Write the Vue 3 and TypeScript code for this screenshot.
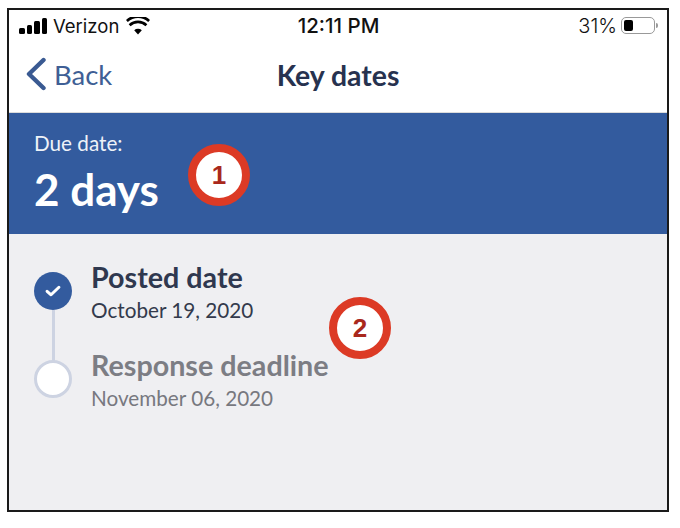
<script setup lang="ts">
const dates = [
  { title: 'Posted date', date: 'October 19, 2020', done: true },
  { title: 'Response deadline', date: 'November 06, 2020', done: false }
]
</script>

<template>
  <main class="frame">
    <div class="status">
      <div class="status-left">
        <span class="signal"><i></i><i></i><i></i><i></i></span>
        <span>Verizon</span>
        <svg class="wifi" width="24" height="18" viewBox="0 0 24 18">
          <path d="M12 17.5 8.2 13.2a5.6 5.6 0 0 1 7.6 0Z" fill="#000" />
          <path d="M3.6 8.2a12.4 12.4 0 0 1 16.8 0" fill="none" stroke="#000" stroke-width="2.7" />
          <path d="M.9 4.9a16.4 16.4 0 0 1 22.2 0" fill="none" stroke="#000" stroke-width="2.7" transform="translate(0 -1)" />
        </svg>
      </div>
      <div class="clock">12:11 PM</div>
      <div class="status-right">
        <span>31%</span>
        <span class="battery"><b></b></span>
        <span class="nub"></span>
      </div>
    </div>
    <nav class="nav">
      <a class="back">
        <svg width="22" height="34" viewBox="0 0 22 34">
          <path d="M18.5 3 4 17l14.500 14" fill="none" stroke="#3a5a92" stroke-width="4.4" stroke-linecap="round" stroke-linejoin="round" />
        </svg>
        <span>Back</span>
      </a>
      <h1>Key dates</h1>
    </nav>
    <header class="banner">
      <p>Due date:</p>
      <h2>2 days</h2>
    </header>
    <section class="content">
      <article v-for="(item, i) in dates" :key="item.title" class="row" :class="{ todo: !item.done }">
        <div class="marker">
          <span class="dot">
            <svg v-if="item.done" width="18" height="14" viewBox="0 0 16 13">
              <path d="M2.500 6.800 6.200 10 13.500 3" fill="none" stroke="#fff" stroke-width="2.800" stroke-linecap="round" stroke-linejoin="round" />
            </svg>
          </span>
          <span v-if="i < dates.length - 1" class="line"></span>
        </div>
        <div class="text">
          <h3>{{ item.title }}</h3>
          <p>{{ item.date }}</p>
        </div>
      </article>
    </section>
    <span class="badge one">1</span>
    <span class="badge two">2</span>
  </main>
</template>

<style scoped>
.frame {
  position: relative;
  box-sizing: border-box;
  width: 662px;
  height: 504px;
  margin: 8px 0 0 7px;
  border: 2px solid #1a1a1a;
  display: flex;
  flex-direction: column;
  background: #fff;
  font-family: Lato, sans-serif;
}

.status {
  height: 31px;
  flex: none;
  display: grid;
  grid-template-columns: 1fr auto 1fr;
  align-items: center;
  padding: 0 9px 0 10px;
  font-family: Inter, "Liberation Sans", sans-serif;
  font-size: 18.500px;
  color: #111;
}

.status-left,
.status-right {
  display: flex;
  align-items: center;
}

.status-left {
  gap: 6px;
}

.status-right {
  justify-content: flex-end;
  font-size: 20px;
  font-weight: 300;
}

.clock {
  font-size: 20.500px;
  font-weight: 500;
}

.signal {
  display: flex;
  align-items: flex-end;
  gap: 2px;
  height: 16px;
}

.signal i {
  width: 5.500px;
  background: #000;
  border-radius: 1.500px;
}

.signal i:nth-child(1) { height: 6px; }
.signal i:nth-child(2) { height: 9px; }
.signal i:nth-child(3) { height: 13px; }
.signal i:nth-child(4) { height: 16px; }

.wifi {
  margin-left: 1px;
}

.battery {
  box-sizing: border-box;
  width: 34px;
  height: 17px;
  margin-left: 4px;
  padding: 2px;
  border: 1px solid #999;
  border-radius: 5px;
  display: flex;
}

.battery b {
  width: 9px;
  background: #000;
  border-radius: 2px;
}

.nub {
  width: 2px;
  height: 5px;
  margin-left: 1px;
  background: #999;
  border-radius: 0 2px 2px 0;
}

.nav {
  position: relative;
  height: 71px;
  flex: none;
  display: flex;
  align-items: center;
  justify-content: center;
  border-bottom: 1px solid #dcdcdc;
}

.back {
  position: absolute;
  left: 16px;
  top: 16px;
  display: flex;
  align-items: center;
  gap: 7px;
  font-size: 27.500px;
  color: #3f5f95;
}

.nav h1 {
  margin: 0 0 4px;
  font-size: 28.400px;
  font-weight: 700;
  color: #27324f;
}

.banner {
  height: 121px;
  flex: none;
  box-sizing: border-box;
  padding: 18px 25px 0;
  background: #335b9e;
  color: #fff;
}

.banner p {
  margin: 0;
  font-size: 20.700px;
  line-height: 24px;
  color: #eef2f8;
}

.banner h2 {
  margin: 7px 0 0;
  font-size: 44px;
  line-height: 54px;
  font-weight: 700;
}

.content {
  flex: 1;
  padding: 26px 25px 0;
  background: #efeff2;
}

.row {
  display: flex;
  gap: 19px;
  height: 88px;
}

.marker {
  width: 38px;
  display: flex;
  flex-direction: column;
  align-items: center;
  padding-top: 12px;
  flex: none;
}

.dot {
  box-sizing: border-box;
  width: 38px;
  height: 38px;
  flex: none;
  border-radius: 50%;
  background: #335b9e;
  display: flex;
  align-items: center;
  justify-content: center;
}

.todo .dot {
  background: #fff;
  border: 3px solid #cdd3e2;
}

.line {
  width: 3px;
  height: 52px;
  flex: none;
  background: #cdd3e2;
}

.text h3 {
  margin: 0;
  font-size: 28.700px;
  line-height: 34px;
  font-weight: 700;
  color: #2f384f;
}

.text p {
  margin: 4px 0 0;
  font-size: 20.700px;
  line-height: 24px;
  color: #333a4c;
}

.todo h3 {
  color: #7c7d84;
}

.todo p {
  color: #77787f;
}

.badge {
  position: absolute;
  box-sizing: border-box;
  width: 62px;
  height: 62px;
  border: 8px solid #dc3a25;
  border-radius: 50%;
  background: #fff;
  color: #a9281c;
  font-family: "Liberation Sans", Arial, sans-serif;
  font-size: 26px;
  font-weight: 700;
  display: flex;
  align-items: center;
  justify-content: center;
}

.one {
  left: 179px;
  top: 134px;
}

.two {
  left: 320px;
  top: 287px;
}
</style>

<style>
html,
body {
  background: #fff;
}
</style>
